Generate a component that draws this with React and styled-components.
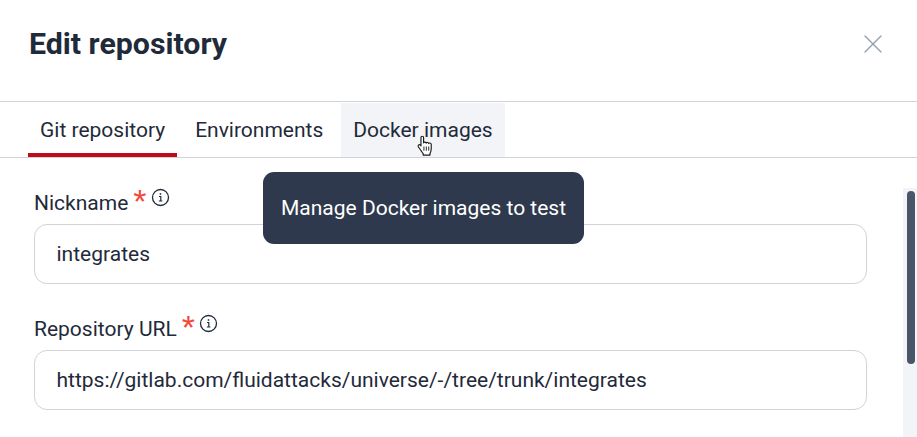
import styled, { createGlobalStyle } from 'styled-components';
import { X } from 'lucide-react';

const TEXT = '#1f2a3a';
const BORDER = '#d2d2da';
const SOFT = '#f3f4f8';

const GlobalStyle = createGlobalStyle`
  html, body {
    margin: 0;
    height: 100%;
    background: #fff;
    overflow: hidden;
  }
  * { box-sizing: border-box; }
`;

const Modal = styled.div`
  position: relative;
  width: 917px;
  height: 437px;
  overflow: hidden;
  background: #fff;
  color: ${TEXT};
  font-family: 'Roboto', sans-serif;
`;

const Header = styled.header`
  display: flex;
  align-items: center;
  justify-content: space-between;
  height: 102px;
  padding: 0 28px 14px 29px;
  border-bottom: 1px solid ${BORDER};
`;

const Title = styled.h1`
  margin: 0;
  font-size: 30.3px;
  font-weight: 700;
  color: ${TEXT};
`;

const CloseBtn = styled.button`
  display: flex;
  padding: 0;
  border: none;
  background: transparent;
  color: #98a0ae;
  cursor: pointer;
`;

const Tabs = styled.nav`
  display: flex;
  gap: 6px;
  height: 56px;
  padding: 1px 0 0 28px;
  border-bottom: 1px solid ${BORDER};
`;

const Tab = styled.div`
  display: flex;
  align-items: flex-start;
  height: 54px;
  padding: 14px 12px 0;
  font-size: 21px;
  line-height: 26px;
  background: ${({ $hover }) => ($hover ? SOFT : 'transparent')};
  border-bottom: 4px solid ${({ $active }) => ($active ? '#bf0b1a' : 'transparent')};
`;

const Body = styled.div`
  display: flex;
  height: 279px;
`;

const Form = styled.form`
  display: flex;
  flex-direction: column;
  gap: 29px;
  width: 903px;
  padding: 29px 36px 0 34px;
`;

const Field = styled.div`
  display: flex;
  flex-direction: column;
  gap: 8px;
`;

const LabelRow = styled.div`
  display: flex;
  align-items: flex-start;
  height: 29px;
`;

const Label = styled.label`
  font-size: 21px;
  line-height: 32px;
`;

const Star = styled.span`
  margin-left: 5px;
  color: #f2483a;
  font-size: 34px;
  line-height: 29px;
  font-family: 'Liberation Sans', sans-serif;
`;

const InfoIcon = styled.svg`
  width: 19px;
  height: 19px;
  margin: 1px 0 0 4px;
  color: ${TEXT};
`;

const Input = styled.input`
  width: 100%;
  height: 60px;
  padding: 0 21.5px;
  border: 1px solid ${BORDER};
  border-radius: 13px;
  background: #fff;
  color: ${TEXT};
  font-family: 'Roboto', sans-serif;
  font-size: 21px;
  outline: none;
`;

const ScrollTrack = styled.div`
  flex: 1;
  margin-top: 30px;
  padding: 3px 2px 0 4px;
  background: ${SOFT};
`;

const ScrollThumb = styled.div`
  height: 173px;
  border-radius: 4px;
  background: #4a5568;
`;

const Tooltip = styled.div`
  position: absolute;
  left: 263px;
  top: 172px;
  display: flex;
  align-items: center;
  height: 72px;
  padding: 0 18px;
  border-radius: 11px;
  background: #2e394d;
  color: #fff;
  font-size: 21px;
`;

const Pointer = styled.svg`
  position: absolute;
  left: 416px;
  top: 135px;
  width: 20px;
  height: 23px;
`;

const Info = () => (
  <InfoIcon viewBox="0 0 19 19" fill="none" stroke="currentColor">
    <circle cx="9.5" cy="9.5" r="8" strokeWidth="1.3" />
    <path d="M8 8.5h1.8v4.3M7.8 13h3.6" strokeWidth="1.2" />
    <path d="M9.500 5.200v1.600" strokeWidth="1.5" />
  </InfoIcon>
);

const App = () => (
  <>
    <GlobalStyle />
    <Modal>
      <Header>
        <Title>Edit repository</Title>
        <CloseBtn type="button">
          <X size={32} strokeWidth={1} />
        </CloseBtn>
      </Header>
      <Tabs>
        <Tab $active>Git repository</Tab>
        <Tab>Environments</Tab>
        <Tab $hover>Docker images</Tab>
      </Tabs>
      <Body>
        <Form>
          <Field>
            <LabelRow>
              <Label>Nickname</Label>
              <Star>*</Star>
              <Info />
            </LabelRow>
            <Input readOnly value="integrates" />
          </Field>
          <Field>
            <LabelRow>
              <Label>Repository URL</Label>
              <Star>*</Star>
              <Info />
            </LabelRow>
            <Input readOnly value="https://gitlab.com/fluidattacks/universe/-/tree/trunk/integrates" />
          </Field>
        </Form>
        <ScrollTrack>
          <ScrollThumb />
        </ScrollTrack>
      </Body>
      <Tooltip>Manage Docker images to test</Tooltip>
      <Pointer viewBox="0 0 18 22">
        <path
          d="M4.200 2.400c0-1.600 2.500-1.600 2.500 0v5.200c.3-1.200 2.400-1.100 2.500.2.4-1 2.300-.9 2.400.4.5-.9 2.300-.7 2.400.8v4.200c0 2.200-.6 3.300-1.200 4.600v1.400H6.300v-1.400C5 16.200 3.200 13.500 1.700 11.300.8 9.900 2.600 8.500 3.700 9.800l.5.7z"
          fill="#fff"
          stroke="#1a1a1a"
          strokeWidth="1.1"
          strokeLinejoin="round"
        />
        <path d="M7 11v4M9.300 11v4M11.600 11v4" stroke="#1a1a1a" strokeWidth="0.9" />
      </Pointer>
    </Modal>
  </>
);

export default App;
